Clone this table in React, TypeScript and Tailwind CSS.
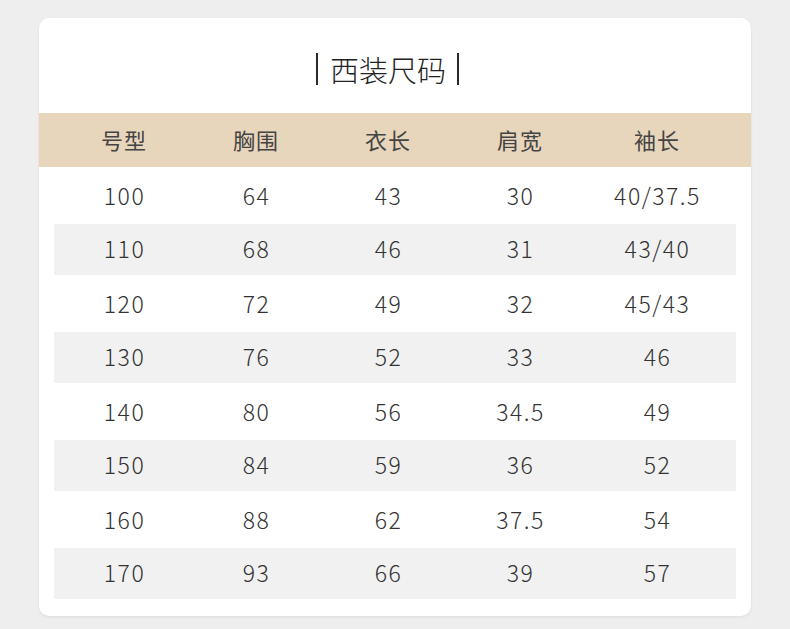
const headers = ["号型", "胸围", "衣长", "肩宽", "袖长"];

const rows: string[][] = [
  ["100", "64", "43", "30", "40/37.5"],
  ["110", "68", "46", "31", "43/40"],
  ["120", "72", "49", "32", "45/43"],
  ["130", "76", "52", "33", "46"],
  ["140", "80", "56", "34.5", "49"],
  ["150", "84", "59", "36", "52"],
  ["160", "88", "62", "37.5", "54"],
  ["170", "93", "66", "39", "57"],
];

const cols = "grid grid-cols-[132px_132px_132px_132px_142px]";

export default function App() {
  return (
    <div
      className="w-[790px] h-[629px] bg-[#eeeeee] pt-[18px] pl-[39px] overflow-hidden"
      style={{ fontFamily: '"Noto Sans CJK SC", "Noto Sans", sans-serif' }}
    >
      <div className="w-[712px] h-[598px] bg-white rounded-[10px] shadow-[0_1px_3px_rgba(0,0,0,0.08)] overflow-hidden">
        {/* 标题 */}
        <div className="h-[95px] flex items-center justify-center pt-[7px] pr-[15px] text-[#222]">
          <div className="w-[2px] h-[32px] bg-[#2a2a2a]" />
          <span className="text-[29px] font-light leading-none ml-[12px] mr-[11px]">
            西装尺码
          </span>
          <div className="w-[2px] h-[32px] bg-[#2a2a2a]" />
        </div>

        {/* 表头 */}
        <div className={`${cols} h-[54px] items-center bg-[#e8d6bc] pl-[19px] pb-[2px] text-[22px] text-[#444]`}>
          {headers.map((h) => (
            <div key={h} className="text-center tracking-[1px]">
              {h}
            </div>
          ))}
        </div>

        {/* 数据行 */}
        <div className="px-[15px]">
          {rows.map((r, i) => (
            <div
              key={r[0]}
              className={`${cols} items-center pl-[4px] text-[23px] font-light text-[#333] ${
                i % 2 === 1 ? "h-[51px] bg-[#f1f1f1] pb-[2px]" : "h-[57px]"
              }`}
            >
              {r.map((v, j) => (
                <div key={j} className="text-center tracking-[1.5px] pl-[1px]">
                  {v}
                </div>
              ))}
            </div>
          ))}
        </div>
      </div>
    </div>
  );
}
